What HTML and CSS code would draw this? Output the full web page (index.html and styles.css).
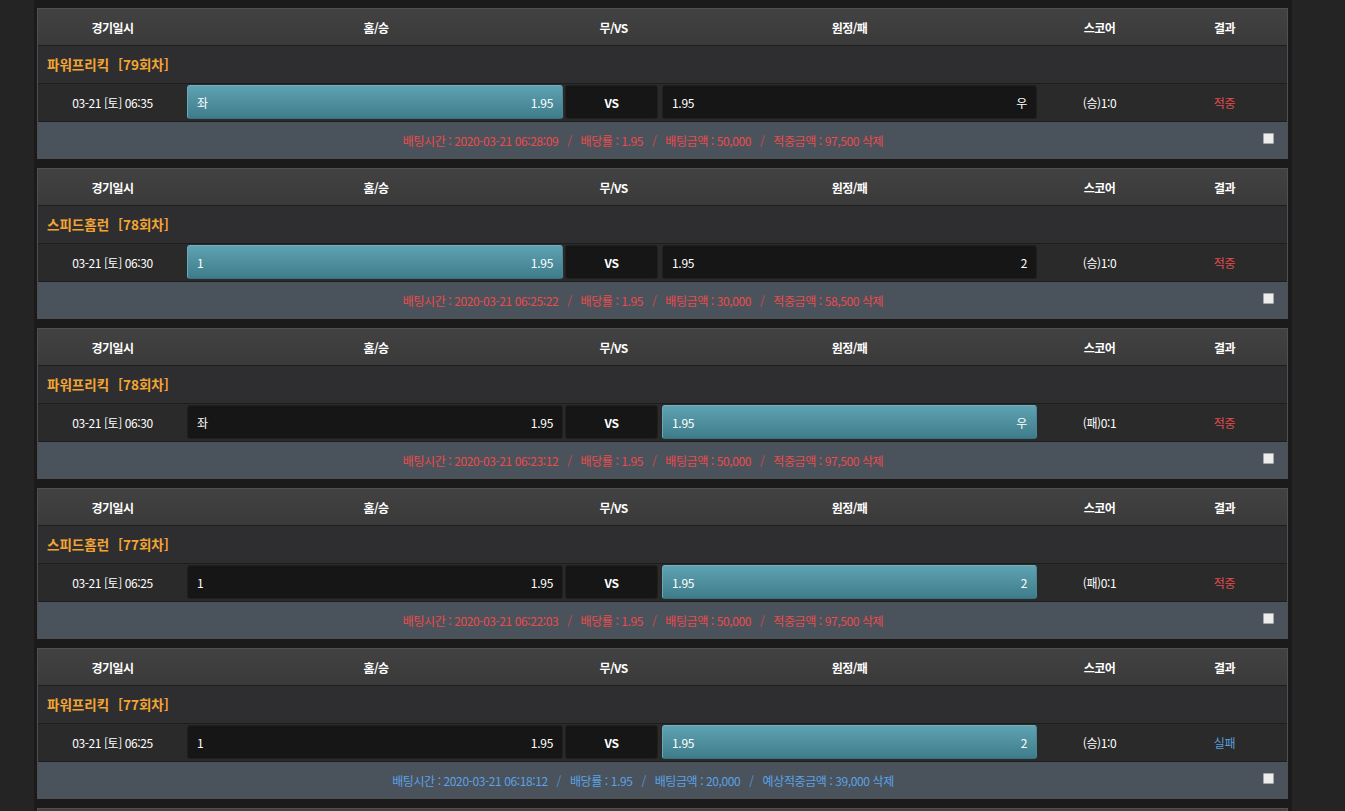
FILE: index.html
```html
<!DOCTYPE html>
<html lang="ko">
<head>
<meta charset="utf-8">
<link rel="stylesheet" href="styles.css">
</head>
<body>
<div class="wrap">

  <div class="bet">
    <div class="row head">
      <div>경기일시</div><div>홈/승</div><div>무/VS</div><div>원정/패</div><div>스코어</div><div>결과</div>
    </div>
    <div class="title">파워프리킥 <span>[79회차]</span></div>
    <div class="row data">
      <div class="date">03-21 [토] 06:35</div>
      <div class="cell"><div class="box home on"><span>좌</span><span>1.95</span></div></div>
      <div class="cell"><div class="box vs">VS</div></div>
      <div class="cell"><div class="box away"><span>1.95</span><span>우</span></div></div>
      <div class="score">(승)1:0</div>
      <div class="res hit">적중</div>
    </div>
    <div class="foot hit">
      <div class="info">배팅시간 : 2020-03-21 06:28:09 <i>/</i> 배당률 : 1.95 <i>/</i> 배팅금액 : 50,000 <i>/</i> 적중금액 : 97,500 삭제</div>
      <div class="chk"><span></span></div>
    </div>
  </div>

  <div class="bet">
    <div class="row head">
      <div>경기일시</div><div>홈/승</div><div>무/VS</div><div>원정/패</div><div>스코어</div><div>결과</div>
    </div>
    <div class="title">스피드홈런 <span>[78회차]</span></div>
    <div class="row data">
      <div class="date">03-21 [토] 06:30</div>
      <div class="cell"><div class="box home on"><span>1</span><span>1.95</span></div></div>
      <div class="cell"><div class="box vs">VS</div></div>
      <div class="cell"><div class="box away"><span>1.95</span><span>2</span></div></div>
      <div class="score">(승)1:0</div>
      <div class="res hit">적중</div>
    </div>
    <div class="foot hit">
      <div class="info">배팅시간 : 2020-03-21 06:25:22 <i>/</i> 배당률 : 1.95 <i>/</i> 배팅금액 : 30,000 <i>/</i> 적중금액 : 58,500 삭제</div>
      <div class="chk"><span></span></div>
    </div>
  </div>

  <div class="bet">
    <div class="row head">
      <div>경기일시</div><div>홈/승</div><div>무/VS</div><div>원정/패</div><div>스코어</div><div>결과</div>
    </div>
    <div class="title">파워프리킥 <span>[78회차]</span></div>
    <div class="row data">
      <div class="date">03-21 [토] 06:30</div>
      <div class="cell"><div class="box home"><span>좌</span><span>1.95</span></div></div>
      <div class="cell"><div class="box vs">VS</div></div>
      <div class="cell"><div class="box away on"><span>1.95</span><span>우</span></div></div>
      <div class="score">(패)0:1</div>
      <div class="res hit">적중</div>
    </div>
    <div class="foot hit">
      <div class="info">배팅시간 : 2020-03-21 06:23:12 <i>/</i> 배당률 : 1.95 <i>/</i> 배팅금액 : 50,000 <i>/</i> 적중금액 : 97,500 삭제</div>
      <div class="chk"><span></span></div>
    </div>
  </div>

  <div class="bet">
    <div class="row head">
      <div>경기일시</div><div>홈/승</div><div>무/VS</div><div>원정/패</div><div>스코어</div><div>결과</div>
    </div>
    <div class="title">스피드홈런 <span>[77회차]</span></div>
    <div class="row data">
      <div class="date">03-21 [토] 06:25</div>
      <div class="cell"><div class="box home"><span>1</span><span>1.95</span></div></div>
      <div class="cell"><div class="box vs">VS</div></div>
      <div class="cell"><div class="box away on"><span>1.95</span><span>2</span></div></div>
      <div class="score">(패)0:1</div>
      <div class="res hit">적중</div>
    </div>
    <div class="foot hit">
      <div class="info">배팅시간 : 2020-03-21 06:22:03 <i>/</i> 배당률 : 1.95 <i>/</i> 배팅금액 : 50,000 <i>/</i> 적중금액 : 97,500 삭제</div>
      <div class="chk"><span></span></div>
    </div>
  </div>

  <div class="bet">
    <div class="row head">
      <div>경기일시</div><div>홈/승</div><div>무/VS</div><div>원정/패</div><div>스코어</div><div>결과</div>
    </div>
    <div class="title">파워프리킥 <span>[77회차]</span></div>
    <div class="row data">
      <div class="date">03-21 [토] 06:25</div>
      <div class="cell"><div class="box home"><span>1</span><span>1.95</span></div></div>
      <div class="cell"><div class="box vs">VS</div></div>
      <div class="cell"><div class="box away on"><span>1.95</span><span>2</span></div></div>
      <div class="score">(승)1:0</div>
      <div class="res miss">실패</div>
    </div>
    <div class="foot miss">
      <div class="info">배팅시간 : 2020-03-21 06:18:12 <i>/</i> 배당률 : 1.95 <i>/</i> 배팅금액 : 20,000 <i>/</i> 예상적중금액 : 39,000 삭제</div>
      <div class="chk"><span></span></div>
    </div>
  </div>

  <div class="bet">
    <div class="row head"></div>
  </div>

</div>
</body>
</html>
```

FILE: styles.css
```css
html, body {
  margin: 0;
  padding: 0;
  background: #242424;
  height: 811px;
  overflow: hidden;
}

body {
  font-family: "Noto Sans CJK KR", "Noto Sans", sans-serif;
  font-size: 12px;
  color: #ffffff;
}

.wrap {
  width: 1251px;
  margin-left: 34px;
  padding: 8px 4px 0 3px;
  background: #1b1b1b;
  min-height: 811px;
}

.bet {
  border: 1px solid #505050;
  margin-bottom: 9px;
  background: #2b2b2b;
}

.row {
  display: grid;
  grid-template-columns: 149px 378px 97px 375px 125px 1fr;
  align-items: center;
}

.head {
  height: 36px;
  background: linear-gradient(#424242, #3a3a3a);
  font-weight: bold;
  text-align: center;
  letter-spacing: -0.6px;
}

.title {
  height: 37px;
  border-top: 1px solid #1e1e1e;
  background: #2e2e30;
  color: #f3a533;
  font-weight: bold;
  font-size: 13.5px;
  letter-spacing: 0;
  line-height: 37px;
  padding-left: 9px;
}

.title span {
  margin-left: 5px;
}

.data {
  height: 37px;
  border-top: 1px solid #1e1e1e;
  background: #2a2a2a;
}

.date, .score, .res {
  text-align: center;
  letter-spacing: -0.4px;
}

.cell {
  height: 37px;
  display: flex;
  align-items: center;
}

.cell:nth-child(2) .box { margin-right: 2px; }
.cell:nth-child(3) .box { margin-right: 4px; }

.box {
  flex: 1;
  height: 32px;
  margin-top: -1px;
  border: 1px solid #1f1f1f;
  border-radius: 3px;
  background: #161616;
  display: flex;
  align-items: center;
  justify-content: space-between;
  padding: 0 9px;
  letter-spacing: -0.3px;
}

.box.vs {
  justify-content: center;
  font-weight: bold;
}

.box.on {
  background: linear-gradient(#5fa2b1, #3e7c8b);
  border-color: #6fb0be #4a8796 #3a7280 #6aaab8;
}

.res.hit { color: #e14a4a; }
.res.miss { color: #5a9fdc; }

.foot {
  height: 36px;
  border-top: 1px solid #1e1e1e;
  background: #4a525c;
  display: flex;
  align-items: center;
}

.info {
  flex: 1;
  text-align: center;
  letter-spacing: -0.4px;
}

.info i {
  font-style: normal;
  margin: 0 6px;
  opacity: 0.8;
}

.foot.hit .info { color: #ec4b4b; }
.foot.miss .info { color: #5ba2e6; }

.chk {
  width: 39px;
  display: flex;
  align-items: center;
}

.chk span {
  width: 9px;
  height: 9px;
  margin-left: 15px;
  margin-top: -3px;
  background: #ececec;
  border: 1px solid #a8a8a8;
  border-radius: 1px;
}
```
